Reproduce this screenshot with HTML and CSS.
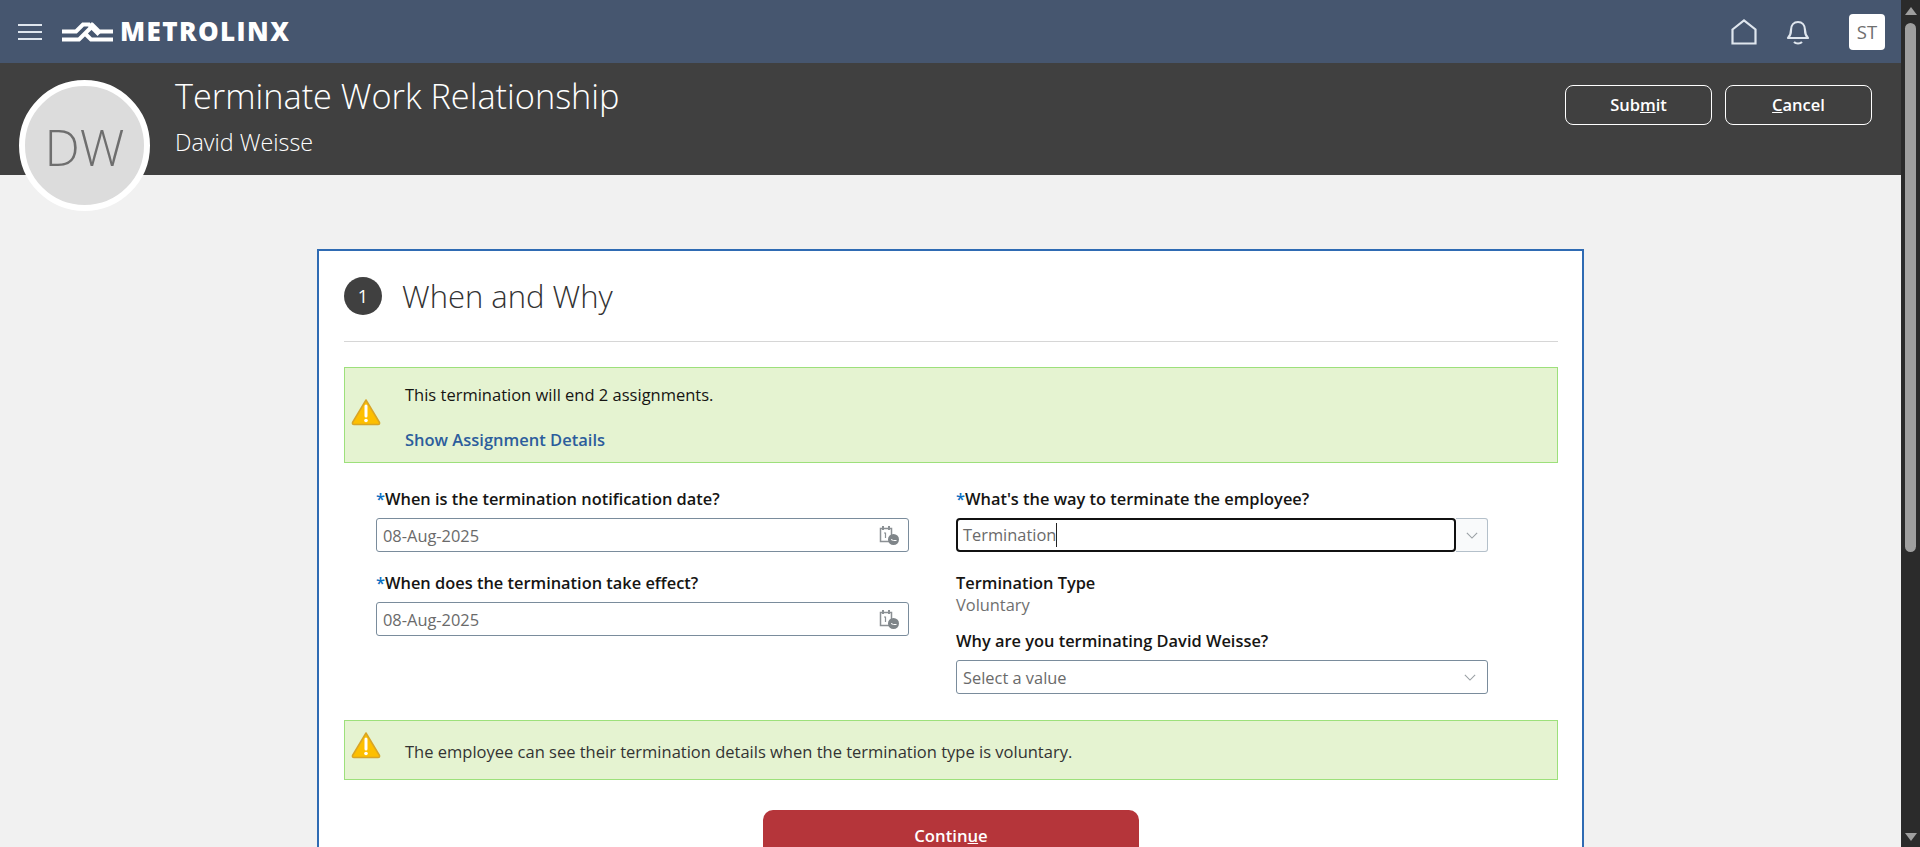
FILE: index.html
```html
<!DOCTYPE html>
<html lang="en">
<head>
    <meta charset="UTF-8">
    <meta name="viewport" content="width=device-width, initial-scale=1.0">
    <title>Terminate Work Relationship</title>
    <link rel="stylesheet" href="styles.css">
</head>
<body>

<div class="app">
    <div class="main">

        <header class="topbar">
            <div class="topbar-left">
                <svg class="hamburger" width="24" height="18" viewBox="0 0 24 18">
                    <path d="M0 2h24M0 9h24M0 16h24" stroke="#dfe6ee" stroke-width="2" fill="none"/>
                </svg>
                <svg class="logo-mark" width="51" height="20" viewBox="0 0 51 20">
                    <path d="M0 9.500H14L21 2.500H27L37 12.500" stroke="#fff" stroke-width="4" fill="none"/>
                    <path d="M0 17.500H17L27 7.500L30 4.500M29 2.500H30L37 9.500H51M23 11.500L29 17.500H51" stroke="#fff" stroke-width="4" fill="none"/>
                </svg>
                <span class="logo-text">METROLINX</span>
            </div>
            <div class="topbar-right">
                <svg class="home-icon" width="26" height="26" viewBox="0 0 26 26">
                    <path d="M1.500 10.500 13 1.500l11.500 9v14h-23z" stroke="#dfe6ee" stroke-width="2.200" fill="none"/>
                </svg>
                <svg class="bell-icon" width="24" height="26" viewBox="0 0 24 26">
                    <path d="M2 19c2-2 3-4 3-8 0-5 3-8 7-8s7 3 7 8c0 4 1 6 3 8z" stroke="#dfe6ee" stroke-width="2.200" fill="none" stroke-linejoin="round"/>
                    <path d="M8 23c2 2 6 2 8 0" stroke="#dfe6ee" stroke-width="2.200" fill="none"/>
                </svg>
                <div class="user-box">ST</div>
            </div>
        </header>

        <section class="title-band">
            <div class="avatar">DW</div>
            <div class="title-text">
                <h1>Terminate Work Relationship</h1>
                <div class="person-name">David Weisse</div>
            </div>
            <div class="title-actions">
                <button class="btn-outline">Sub<u>m</u>it</button>
                <button class="btn-outline"><u>C</u>ancel</button>
            </div>
        </section>

        <section class="card">
            <div class="step-head">
                <span class="step-num">1</span>
                <h2>When and Why</h2>
            </div>

            <div class="banner banner-tall">
                <svg class="warn-icon" width="30" height="28" viewBox="0 0 30 28">
                    <path d="M15 2 28.500 24.500q.5 2-1.500 2H3q-2 0-1.500-2z" fill="#fdbf00" stroke="#d8a526" stroke-width="1.500" stroke-linejoin="round"/>
                    <path d="M15 8v10" stroke="#fff" stroke-width="3" stroke-linecap="round"/>
                    <circle cx="15" cy="22.500" r="1.800" fill="#fff"/>
                </svg>
                <div class="banner-body">
                    <div class="banner-dark">This termination will end 2 assignments.</div>
                    <a class="banner-link">Show Assignment Details</a>
                </div>
            </div>

            <div class="form-grid">
                <div class="form-col">
                    <div class="field">
                        <label><span class="req">*</span>When is the termination notification date?</label>
                        <div class="input">
                            <span>08-Aug-2025</span>
                            <svg class="cal-icon" width="22" height="22" viewBox="0 0 22 22">
                                <path d="M2.500 4.500h11v13h-11z" stroke="#8b9094" stroke-width="1.500" fill="none"/>
                                <path d="M5 2v4M11 2v4" stroke="#8b9094" stroke-width="2"/>
                                <path d="M6 9h1.500v5" stroke="#8b9094" stroke-width="1.200" fill="none"/>
                                <circle cx="15.500" cy="15.500" r="5.500" fill="#7f8589"/>
                                <path d="M13 15.500l2.500 1h3" stroke="#fff" stroke-width="1" fill="none"/>
                            </svg>
                        </div>
                    </div>
                    <div class="field">
                        <label><span class="req">*</span>When does the termination take effect?</label>
                        <div class="input">
                            <span>08-Aug-2025</span>
                            <svg class="cal-icon" width="22" height="22" viewBox="0 0 22 22">
                                <path d="M2.500 4.500h11v13h-11z" stroke="#8b9094" stroke-width="1.500" fill="none"/>
                                <path d="M5 2v4M11 2v4" stroke="#8b9094" stroke-width="2"/>
                                <path d="M6 9h1.500v5" stroke="#8b9094" stroke-width="1.200" fill="none"/>
                                <circle cx="15.500" cy="15.500" r="5.500" fill="#7f8589"/>
                                <path d="M13 15.500l2.500 1h3" stroke="#fff" stroke-width="1" fill="none"/>
                            </svg>
                        </div>
                    </div>
                </div>

                <div class="form-col">
                    <div class="field">
                        <label><span class="req">*</span>What's the way to terminate the employee?</label>
                        <div class="combo">
                            <div class="combo-focus"><span class="caret">Termination</span></div>
                            <div class="combo-arrow">
                                <svg width="12" height="7" viewBox="0 0 14 8"><path d="M1 1l6 6 6-6" stroke="#9aa0a4" stroke-width="1.300" fill="none"/></svg>
                            </div>
                        </div>
                    </div>
                    <div class="readonly-field">
                        <div class="ro-label">Termination Type</div>
                        <div class="ro-value">Voluntary</div>
                    </div>
                    <div class="field">
                        <label>Why are you terminating David Weisse?</label>
                        <div class="input input-select">
                            <span>Select a value</span>
                            <svg width="12" height="7" viewBox="0 0 14 8"><path d="M1 1l6 6 6-6" stroke="#9aa0a4" stroke-width="1.300" fill="none"/></svg>
                        </div>
                    </div>
                </div>
            </div>

            <div class="banner banner-short">
                <svg class="warn-icon" width="30" height="28" viewBox="0 0 30 28">
                    <path d="M15 2 28.500 24.500q.5 2-1.500 2H3q-2 0-1.500-2z" fill="#fdbf00" stroke="#d8a526" stroke-width="1.500" stroke-linejoin="round"/>
                    <path d="M15 8v10" stroke="#fff" stroke-width="3" stroke-linecap="round"/>
                    <circle cx="15" cy="22.500" r="1.800" fill="#fff"/>
                </svg>
                <div class="banner-text">The employee can see their termination details when the termination type is voluntary.</div>
            </div>

            <div class="continue-row">
                <button class="btn-continue">Contin<u>u</u>e</button>
            </div>
        </section>

    </div>

    <div class="scrollbar">
        <span class="arrow-up"></span>
        <div class="scroll-track"><div class="scroll-thumb"></div></div>
        <span class="arrow-down"></span>
    </div>
</div>

</body>
</html>
```

FILE: styles.css
```css
html, body {
    margin: 0;
    height: 100%;
    overflow: hidden;
}

body {
    font-family: "Open Sans", "Noto Sans", sans-serif;
    background-color: #f1f1f1;
    color: #161513;
}

.app {
    display: flex;
    height: 847px;
}

.main {
    flex: 1;
    overflow: hidden;
}

/* top navigation */
.topbar {
    height: 63px;
    background: #46566f;
    display: flex;
    align-items: center;
    justify-content: space-between;
}

.topbar-left {
    display: flex;
    align-items: center;
    padding-left: 18px;
}

.hamburger {
    margin-right: 20px;
}

.logo-mark {
    margin-right: 7px;
}

.logo-text {
    font-weight: 800;
    font-size: 26px;
    letter-spacing: 1.400px;
    color: #fff;
    padding-bottom: 2px;
}

.topbar-right {
    display: flex;
    align-items: center;
    padding-right: 16px;
}

.home-icon {
    margin-right: 29px;
}

.bell-icon {
    margin-right: 39px;
}

.user-box {
    width: 36px;
    height: 36px;
    border-radius: 4px;
    background: #fff;
    color: #6f6f6f;
    font-size: 18.500px;
    display: flex;
    align-items: center;
    justify-content: center;
}

/* dark title band */
.title-band {
    height: 112px;
    background: #404040;
    display: flex;
    align-items: flex-start;
    padding-left: 19px;
    padding-right: 29px;
}

.avatar {
    flex: none;
    width: 119px;
    height: 116px;
    padding-top: 3px;
    margin-top: 17px;
    border: 6px solid #fff;
    border-radius: 50%;
    background: #dcdcdc;
    color: #6e6e6e;
    font-size: 50px;
    font-weight: 300;
    display: flex;
    align-items: center;
    justify-content: center;
    position: relative;
}

.title-text {
    flex: 1;
    margin-left: 25px;
    color: #fff;
}

h1 {
    margin: 11px 0 0;
    font-size: 34.300px;
    font-weight: 300;
    line-height: 44px;
}

.person-name {
    margin-top: 9px;
    font-size: 23.300px;
    font-weight: 300;
    line-height: 30px;
}

.title-actions {
    display: flex;
    gap: 13px;
    margin-top: 22px;
}

.btn-outline {
    width: 147px;
    height: 40px;
    padding-bottom: 3px;
    background: transparent;
    border: 1px solid #fff;
    border-radius: 8px;
    color: #fff;
    font-family: inherit;
    font-size: 16.500px;
    font-weight: 600;
}

/* step card */
.card {
    width: 1214px;
    margin: 74px 0 0 317px;
    padding: 0 24px 40px 25px;
    background: #fff;
    border: 2px solid #2f6bb3;
}

.step-head {
    height: 90px;
    display: flex;
    align-items: center;
    border-bottom: 1px solid #d6d6d6;
}

.step-num {
    width: 38px;
    height: 38px;
    border-radius: 50%;
    background: #404040;
    color: #fff;
    font-size: 18px;
    display: flex;
    align-items: center;
    justify-content: center;
}

h2 {
    margin: 0 0 0 20px;
    font-size: 31px;
    font-weight: 300;
    color: #333;
}

.banner {
    background: #e5f3d1;
    border: 1px solid #9de07b;
    display: flex;
    align-items: center;
    padding-left: 6px;
    font-size: 16.500px;
}

.banner-tall {
    height: 94px;
    margin-top: 25px;
}

.banner-tall .warn-icon {
    margin-top: -6px;
}

.banner-short {
    height: 58px;
}

.banner-short .warn-icon {
    margin-top: -10px;
}

.warn-icon {
    flex: none;
    margin-right: 24px;
}

.banner-body {
    display: flex;
    flex-direction: column;
    gap: 25px;
    padding-top: 5px;
}

.banner-dark {
    line-height: 20px;
}

.banner-link {
    color: #2c5d9c;
    font-weight: 600;
    line-height: 20px;
}

.banner-text {
    color: #333;
    padding-top: 3px;
}

/* form */
.form-grid {
    display: grid;
    grid-template-columns: 533px 532px;
    column-gap: 47px;
    padding: 25px 0 26px 32px;
}

.form-col {
    display: flex;
    flex-direction: column;
}

.field label {
    display: block;
    font-size: 16.400px;
    font-weight: 600;
    line-height: 22px;
    margin-bottom: 8px;
}

.form-col .field + .field {
    margin-top: 20px;
}

.req {
    color: #0a6fc2;
}

.input {
    height: 34px;
    box-sizing: border-box;
    border: 1px solid #7a8c9c;
    border-radius: 3px;
    padding: 0 8px 0 6px;
    display: flex;
    align-items: center;
    justify-content: space-between;
    color: #6a6a6a;
    font-size: 16.400px;
}

.input-select {
    padding-right: 11px;
}

.combo {
    display: flex;
    height: 34px;
}

.combo-focus {
    flex: 1;
    box-sizing: border-box;
    border: 2px solid #111;
    border-radius: 4px;
    padding-left: 5px;
    display: flex;
    align-items: center;
    color: #6a6a6a;
    font-size: 16.400px;
}

.caret {
    border-right: 1px solid #222;
    line-height: 24px;
}

.combo-arrow {
    width: 32px;
    box-sizing: border-box;
    border: 1px solid #b4c0ca;
    border-left: none;
    border-radius: 0 3px 3px 0;
    background: #f9fafb;
    display: flex;
    align-items: center;
    justify-content: center;
}

.readonly-field {
    margin-top: 20px;
    margin-bottom: 14px;
    font-size: 16.400px;
    line-height: 22px;
}

.ro-label {
    font-weight: 600;
}

.ro-value {
    color: #6f6f6f;
}

.continue-row {
    display: flex;
    justify-content: center;
    margin-top: 30px;
}

.btn-continue {
    width: 376px;
    height: 52px;
    padding-bottom: 2px;
    background: #b5353a;
    border: none;
    border-radius: 10px;
    color: #fff;
    font-family: inherit;
    font-size: 16.700px;
    font-weight: 600;
}

/* page scrollbar */
.scrollbar {
    flex: none;
    width: 19px;
    background: #2b2b2b;
    display: flex;
    flex-direction: column;
    align-items: center;
    padding: 7px 0 6px;
    box-sizing: border-box;
}

.scroll-track {
    flex: 1;
    width: 11px;
    padding-top: 8px;
}

.scroll-thumb {
    height: 529px;
    background: #9f9f9f;
    border-radius: 6px;
}

.arrow-up {
    border-left: 6px solid transparent;
    border-right: 6px solid transparent;
    border-bottom: 8px solid #9f9f9f;
}

.arrow-down {
    border-left: 6px solid transparent;
    border-right: 6px solid transparent;
    border-top: 8px solid #9f9f9f;
}
```
